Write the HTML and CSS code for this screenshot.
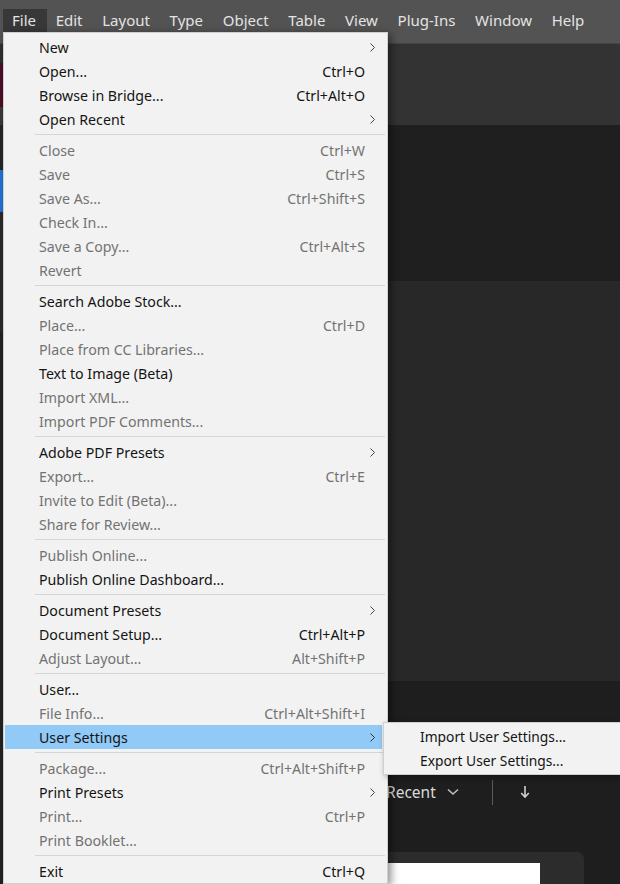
FILE: index.html
```html
<!DOCTYPE html>
<html>
<head>
<meta charset="utf-8">
<link rel="stylesheet" href="styles.css">
</head>
<body>
<div class="app">
  <div class="menubar">
    <div class="mb-item active">File</div>
    <div class="mb-item">Edit</div>
    <div class="mb-item">Layout</div>
    <div class="mb-item">Type</div>
    <div class="mb-item">Object</div>
    <div class="mb-item">Table</div>
    <div class="mb-item">View</div>
    <div class="mb-item">Plug-Ins</div>
    <div class="mb-item">Window</div>
    <div class="mb-item">Help</div>
  </div>
  <div class="workspace">
    <div class="toolstrip">
      <div class="ts ts-a"></div>
      <div class="ts ts-b"></div>
      <div class="ts ts-c"></div>
      <div class="ts ts-d"></div>
      <div class="ts ts-e"></div>
      <div class="ts ts-f"></div>
      <div class="ts ts-g"></div>
    </div>
    <div class="main">
      <div class="topstrip"></div>
      <div class="gap-area"></div>
      <div class="panel"></div>
      <div class="lower">
        <div class="toolbar">
          <span class="tb-label">Recent</span>
          <svg class="tb-chev" width="12" height="8" viewBox="0 0 12 8"><path d="M1 1.5 L6 6 L11 1.5" fill="none" stroke="#bdbdbd" stroke-width="1.6"/></svg>
          <span class="tb-sep"></span>
          <svg class="tb-down" width="10" height="14" viewBox="0 0 10 14"><path d="M5 1 V12 M1.2 8 L5 12 L8.8 8" fill="none" stroke="#cfcfcf" stroke-width="1.6"/></svg>
        </div>
        <div class="card"><div class="thumb"></div></div>
      </div>
    </div>
  </div>

  <div class="menu">
    <div class="mi"><span class="lbl">New</span><span class="sc"></span><span class="ar"><svg width="5" height="9" viewBox="0 0 5 9"><path d="M0.5 0.5 L4.5 4.5 L0.5 8.5" fill="none" stroke="#444" stroke-width="1"/></svg></span></div>
    <div class="mi"><span class="lbl">Open...</span><span class="sc">Ctrl+O</span><span class="ar"></span></div>
    <div class="mi"><span class="lbl">Browse in Bridge...</span><span class="sc">Ctrl+Alt+O</span><span class="ar"></span></div>
    <div class="mi"><span class="lbl">Open Recent</span><span class="sc"></span><span class="ar"><svg width="5" height="9" viewBox="0 0 5 9"><path d="M0.5 0.5 L4.5 4.5 L0.5 8.5" fill="none" stroke="#444" stroke-width="1"/></svg></span></div>
    <div class="sep"></div>
    <div class="mi dis"><span class="lbl">Close</span><span class="sc">Ctrl+W</span><span class="ar"></span></div>
    <div class="mi dis"><span class="lbl">Save</span><span class="sc">Ctrl+S</span><span class="ar"></span></div>
    <div class="mi dis"><span class="lbl">Save As...</span><span class="sc">Ctrl+Shift+S</span><span class="ar"></span></div>
    <div class="mi dis"><span class="lbl">Check In...</span><span class="sc"></span><span class="ar"></span></div>
    <div class="mi dis"><span class="lbl">Save a Copy...</span><span class="sc">Ctrl+Alt+S</span><span class="ar"></span></div>
    <div class="mi dis"><span class="lbl">Revert</span><span class="sc"></span><span class="ar"></span></div>
    <div class="sep"></div>
    <div class="mi"><span class="lbl">Search Adobe Stock...</span><span class="sc"></span><span class="ar"></span></div>
    <div class="mi dis"><span class="lbl">Place...</span><span class="sc">Ctrl+D</span><span class="ar"></span></div>
    <div class="mi dis"><span class="lbl">Place from CC Libraries...</span><span class="sc"></span><span class="ar"></span></div>
    <div class="mi"><span class="lbl">Text to Image (Beta)</span><span class="sc"></span><span class="ar"></span></div>
    <div class="mi dis"><span class="lbl">Import XML...</span><span class="sc"></span><span class="ar"></span></div>
    <div class="mi dis"><span class="lbl">Import PDF Comments...</span><span class="sc"></span><span class="ar"></span></div>
    <div class="sep"></div>
    <div class="mi"><span class="lbl">Adobe PDF Presets</span><span class="sc"></span><span class="ar"><svg width="5" height="9" viewBox="0 0 5 9"><path d="M0.5 0.5 L4.5 4.5 L0.5 8.5" fill="none" stroke="#444" stroke-width="1"/></svg></span></div>
    <div class="mi dis"><span class="lbl">Export...</span><span class="sc">Ctrl+E</span><span class="ar"></span></div>
    <div class="mi dis"><span class="lbl">Invite to Edit (Beta)...</span><span class="sc"></span><span class="ar"></span></div>
    <div class="mi dis"><span class="lbl">Share for Review...</span><span class="sc"></span><span class="ar"></span></div>
    <div class="sep"></div>
    <div class="mi dis"><span class="lbl">Publish Online...</span><span class="sc"></span><span class="ar"></span></div>
    <div class="mi"><span class="lbl">Publish Online Dashboard...</span><span class="sc"></span><span class="ar"></span></div>
    <div class="sep"></div>
    <div class="mi"><span class="lbl">Document Presets</span><span class="sc"></span><span class="ar"><svg width="5" height="9" viewBox="0 0 5 9"><path d="M0.5 0.5 L4.5 4.5 L0.5 8.5" fill="none" stroke="#444" stroke-width="1"/></svg></span></div>
    <div class="mi"><span class="lbl">Document Setup...</span><span class="sc">Ctrl+Alt+P</span><span class="ar"></span></div>
    <div class="mi dis"><span class="lbl">Adjust Layout...</span><span class="sc">Alt+Shift+P</span><span class="ar"></span></div>
    <div class="sep"></div>
    <div class="mi"><span class="lbl">User...</span><span class="sc"></span><span class="ar"></span></div>
    <div class="mi dis"><span class="lbl">File Info...</span><span class="sc">Ctrl+Alt+Shift+I</span><span class="ar"></span></div>
    <div class="mi hl"><span class="lbl">User Settings</span><span class="sc"></span><span class="ar"><svg width="5" height="9" viewBox="0 0 5 9"><path d="M0.5 0.5 L4.5 4.5 L0.5 8.5" fill="none" stroke="#333" stroke-width="1"/></svg></span></div>
    <div class="sep"></div>
    <div class="mi dis"><span class="lbl">Package...</span><span class="sc">Ctrl+Alt+Shift+P</span><span class="ar"></span></div>
    <div class="mi"><span class="lbl">Print Presets</span><span class="sc"></span><span class="ar"><svg width="5" height="9" viewBox="0 0 5 9"><path d="M0.5 0.5 L4.5 4.5 L0.5 8.5" fill="none" stroke="#444" stroke-width="1"/></svg></span></div>
    <div class="mi dis"><span class="lbl">Print...</span><span class="sc">Ctrl+P</span><span class="ar"></span></div>
    <div class="mi dis"><span class="lbl">Print Booklet...</span><span class="sc"></span><span class="ar"></span></div>
    <div class="sep"></div>
    <div class="mi"><span class="lbl">Exit</span><span class="sc">Ctrl+Q</span><span class="ar"></span></div>
  </div>

  <div class="submenu">
    <div class="smi">Import User Settings...</div>
    <div class="smi">Export User Settings...</div>
  </div>
</div>
</body>
</html>
```
FILE: styles.css
```css
* { box-sizing: border-box; }
html, body { margin: 0; padding: 0; }
body {
  width: 620px;
  height: 884px;
  overflow: hidden;
  background: #1e1e1e;
  font-family: "Noto Sans", "Open Sans", sans-serif;
}
.app {
  position: relative;
  width: 620px;
  height: 884px;
  overflow: hidden;
}
.menubar {
  height: 44px;
  background: #535353;
  display: flex;
  align-items: flex-start;
  padding: 9px 0 0 3px;
  border-bottom: 1px solid #454545;
}
.mb-item {
  height: 23px;
  line-height: 22px;
  padding: 0 10.7px 0 9px;
  font-size: 15px;
  color: #e3e3e3;
  white-space: nowrap;
}
.mb-item.active { background: #383838; }

.workspace {
  display: flex;
  height: 840px;
  overflow: hidden;
}
.toolstrip {
  width: 3px;
  flex-shrink: 0;
  display: flex;
  flex-direction: column;
  background: #262626;
}
.ts { flex-shrink: 0; }
.ts-a { height: 19px; background: #2f2f2f; }
.ts-b { height: 44px; background: #4c0c28; }
.ts-c { height: 18px; background: #3a3a3a; }
.ts-d { height: 45px; background: #262626; }
.ts-e { height: 42px; background: #2472d9; }
.ts-f { height: 120px; background: #2a2a2a; }
.ts-g { flex: 1; background: #232323; }

.main {
  flex: 1;
  display: flex;
  flex-direction: column;
  overflow: hidden;
}
.topstrip { height: 81px; flex-shrink: 0; background: #333333; }
.gap-area { height: 156px; flex-shrink: 0; background: #1f1f1f; }
.panel { height: 400px; flex-shrink: 0; background: #282828; }
.lower {
  flex: 1 0 auto;
  background: #1e1e1e;
  padding-top: 98px;
}
.toolbar {
  display: flex;
  align-items: center;
  height: 26px;
  padding-left: 383px;
}
.tb-label {
  font-size: 15.5px;
  color: #d9d9d9;
}
.tb-chev { margin-left: 11px; }
.tb-sep {
  width: 1px;
  height: 25px;
  background: #5a5a5a;
  margin-left: 33px;
}
.tb-down { margin-left: 27px; }
.card {
  margin: 47px 0 0 300px;
  width: 281px;
  height: 60px;
  background: #2c2c2c;
  border-radius: 7px;
  padding: 11px 0 0 0;
}
.thumb {
  width: 237px;
  height: 50px;
  background: #ffffff;
}

.menu {
  position: absolute;
  left: 3px;
  top: 32px;
  width: 385px;
  background: #f2f2f2;
  border: 1px solid #cfcfcf;
  padding: 2px 5px 0 1px;
  box-shadow: 3px 2px 8px rgba(0,0,0,0.45);
}
.mi {
  height: 24px;
  display: grid;
  grid-template-columns: 1fr auto 17px;
  align-items: center;
  padding-left: 34px;
  font-size: 14.2px;
  color: #141414;
  white-space: nowrap;
}
.mi.dis { color: #727272; }
.mi.hl { background: #91c9f7; }
.mi .sc { text-align: right; }
.mi .ar { display: flex; align-items: center; padding-left: 5px; }
.mi .ar svg { display: block; }
.sep {
  height: 7px;
  margin: 0 -3px 0 30px;
  position: relative;
}
.sep::after {
  content: "";
  position: absolute;
  left: 0;
  right: 0;
  top: 3px;
  height: 1px;
  background: #d5d5d5;
}
.submenu {
  position: absolute;
  left: 383px;
  top: 722px;
  width: 260px;
  background: #f2f2f2;
  border: 1px solid #cfcfcf;
  padding: 2px 0 1px 1px;
  box-shadow: 2px 2px 6px rgba(0,0,0,0.35);
}
.smi {
  height: 24px;
  line-height: 24px;
  padding-left: 35px;
  font-size: 13.8px;
  color: #141414;
  white-space: nowrap;
}
```
